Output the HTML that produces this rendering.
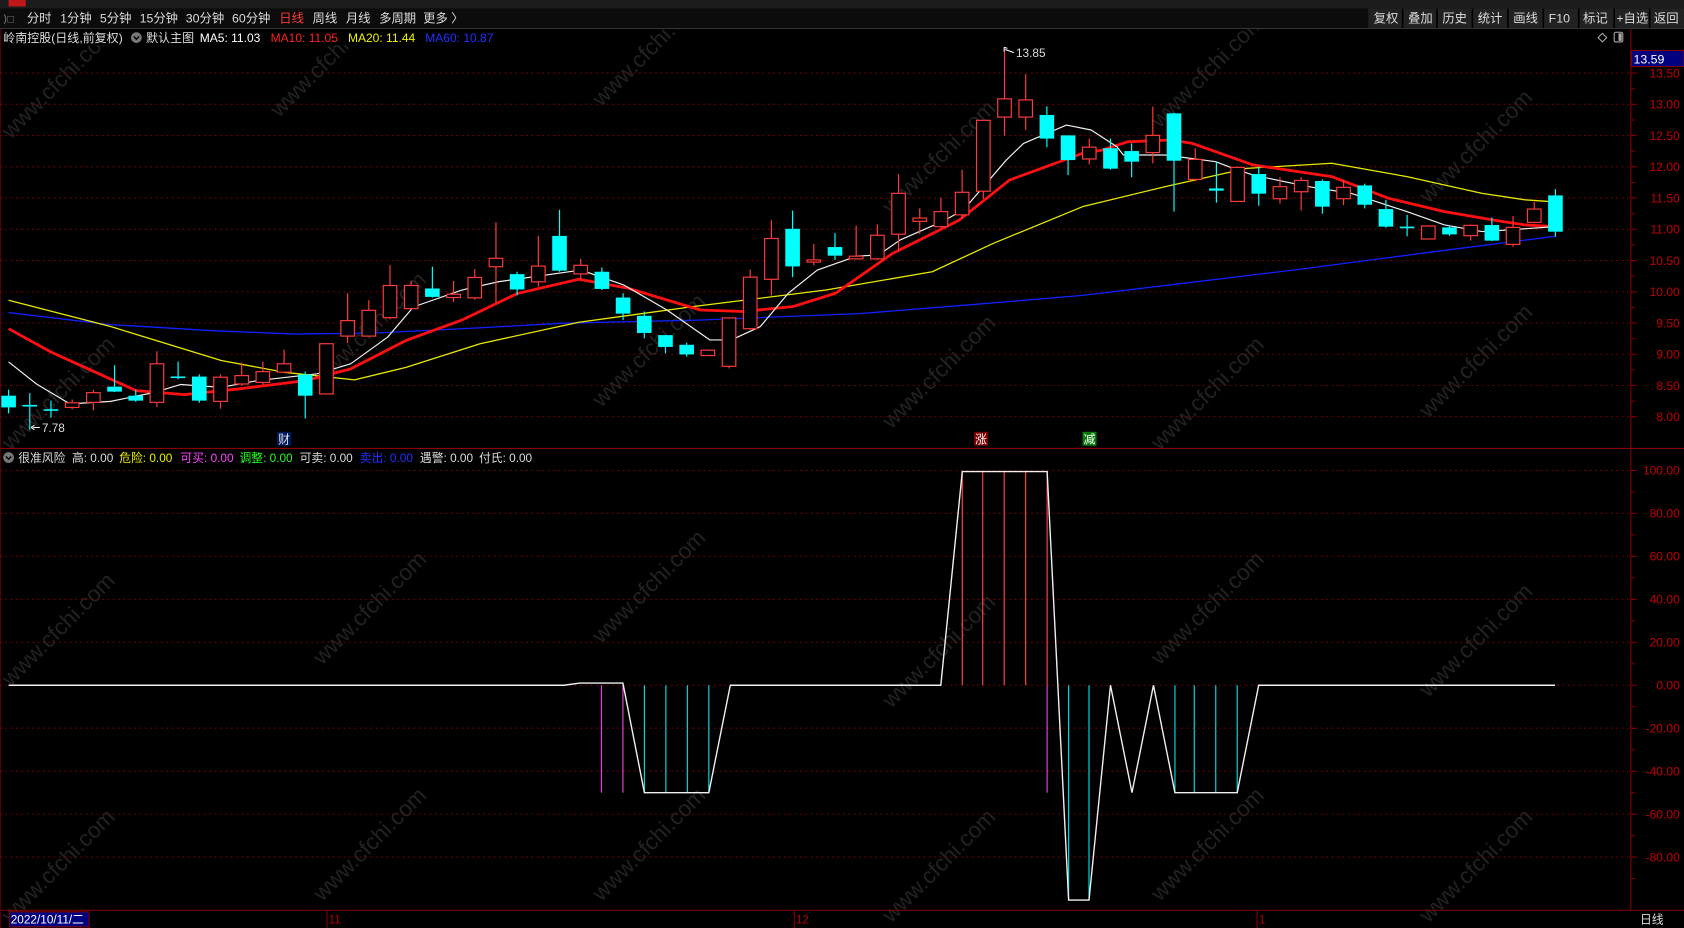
<!DOCTYPE html>
<html><head><meta charset="utf-8"><style>
html,body{margin:0;padding:0;background:#000;overflow:hidden}
svg{display:block}
text{font-family:"Liberation Sans","Noto Sans CJK SC",sans-serif}
</style></head><body>
<svg id="s" width="1684" height="928" viewBox="0 0 1568 864" xmlns="http://www.w3.org/2000/svg">
<rect width="1568" height="864" fill="#000"/>
<g id="wm" fill="#222" font-size="21"></g>
<rect x="0" y="0" width="1568" height="8" fill="#1c1c1c"/>
<rect x="8" y="0" width="16" height="6" fill="#c01818"/>
<rect x="0" y="8" width="1568" height="19" fill="#0c0c0c"/>
<line x1="0" y1="26.5" x2="1568" y2="26.5" stroke="#333"/>
<g font-size="11.5" fill="#ddd">
<text x="3" y="21" fill="#888" font-size="10">⟩□</text>
<text x="25" y="21">分时</text><text x="56" y="21">1分钟</text><text x="93" y="21">5分钟</text>
<text x="130" y="21">15分钟</text><text x="173" y="21">30分钟</text><text x="216" y="21">60分钟</text>
<text x="260" y="21" fill="#ff3b3b">日线</text><text x="291" y="21">周线</text><text x="322" y="21">月线</text>
<text x="353" y="21">多周期</text><text x="394" y="21">更多 〉</text>
</g>
<g font-size="11.5" fill="#ddd">
<rect x="1274" y="8" width="294" height="18" fill="#222"/>
<g stroke="#000" stroke-width="1.5"><line x1="1306" y1="8" x2="1306" y2="26"/><line x1="1338" y1="8" x2="1338" y2="26"/><line x1="1371" y1="8" x2="1371" y2="26"/><line x1="1404" y1="8" x2="1404" y2="26"/><line x1="1437" y1="8" x2="1437" y2="26"/><line x1="1470" y1="8" x2="1470" y2="26"/><line x1="1503" y1="8" x2="1503" y2="26"/><line x1="1536" y1="8" x2="1536" y2="26"/></g>
<text x="1279" y="21">复权</text><text x="1311" y="21">叠加</text><text x="1343" y="21">历史</text><text x="1376" y="21">统计</text><text x="1409" y="21">画线</text><text x="1442" y="21">F10</text><text x="1474" y="21">标记</text><text x="1505" y="21">+自选</text><text x="1540" y="21">返回</text>
</g>
<rect x="0" y="27" width="470" height="15" fill="#000"/>
<g font-size="11.2">
<text x="3" y="39" fill="#ddd">岭南控股(日线,前复权)</text>
<circle cx="127" cy="35" r="5" fill="#777"/><path d="M124.5 33.8 L127 36.5 L129.5 33.8" stroke="#000" fill="none" stroke-width="1.3"/>
<text x="136" y="39" fill="#ddd">默认主图</text>
<text x="186" y="39" fill="#fff">MA5: 11.03</text>
<text x="252" y="39" fill="#ff2020">MA10: 11.05</text>
<text x="324" y="39" fill="#f0f000">MA20: 11.44</text>
<text x="396" y="39" fill="#2030ff">MA60: 10.87</text>
</g>
<path d="M1488 35 l4 -4 l4 4 l-4 4z" fill="none" stroke="#aaa"/>
<rect x="1503" y="30" width="8" height="9" rx="1.5" fill="none" stroke="#aaa"/><rect x="1507" y="31" width="3" height="7" fill="#aaa"/>
<line x1="1518.5" y1="27" x2="1518.5" y2="847" stroke="#8a0000"/>
<line x1="0" y1="417.5" x2="1568" y2="417.5" stroke="#8a0000"/>
<line x1="0" y1="847.5" x2="1568" y2="847.5" stroke="#8a0000"/>
<line x1="0.5" y1="27" x2="0.5" y2="864" stroke="#500"/>
<g id="grid"></g>
<rect x="1519" y="47" width="49" height="15" fill="#000080" stroke="#8a0000"/>
<text x="1521" y="59" fill="#fff" font-size="11.5">13.59</text>
<g id="ma"></g>
<g id="cd"></g>
<path d="M31 398 L37 398" stroke="#fff"/><path d="M29 398 l3 -2 M29 398 l3 2" stroke="#fff"/>
<text x="39" y="402" fill="#ddd" font-size="11">7.78</text>
<path d="M936 46 L944 49" stroke="#fff"/><path d="M935 44 l0 4 M935 44 l3 1" stroke="#fff"/>
<text x="946" y="53" fill="#ddd" font-size="11">13.85</text>
<rect x="258" y="402" width="13" height="13" fill="#001a60"/><text x="259" y="413" fill="#ddd" font-size="11">财</text>
<rect x="907" y="402" width="13" height="13" fill="#7a0000"/><text x="908" y="413" fill="#fff" font-size="11">涨</text>
<rect x="1008" y="402" width="13" height="13" fill="#0a7a0a"/><text x="1009" y="413" fill="#fff" font-size="11">减</text>
<g font-size="11">
<circle cx="8" cy="426" r="5" fill="#777"/><path d="M5.5 425 L8 427.5 L10.5 425" stroke="#000" fill="none" stroke-width="1.3"/>
<text x="17" y="430" fill="#ddd">很准风险</text>
<text x="67" y="430" fill="#ddd">高: 0.00</text>
<text x="111" y="430" fill="#f0f000">危险: 0.00</text>
<text x="168" y="430" fill="#ff40ff">可买: 0.00</text>
<text x="223" y="430" fill="#20ff20">调整: 0.00</text>
<text x="279" y="430" fill="#ddd">可卖: 0.00</text>
<text x="335" y="430" fill="#2030ff">卖出: 0.00</text>
<text x="391" y="430" fill="#ddd">遇警: 0.00</text>
<text x="446" y="430" fill="#ddd">付氏: 0.00</text>
</g>
<g id="ind"></g>
<rect x="9" y="849" width="74" height="14" fill="#000080" stroke="#8a0000"/>
<text x="10" y="860" fill="#fff" font-size="11">2022/10/11/二</text>
<g stroke="#8a0000"><line x1="304.5" y1="848" x2="304.5" y2="864"/><line x1="739.5" y1="848" x2="739.5" y2="864"/><line x1="1170.5" y1="848" x2="1170.5" y2="864"/></g>
<g fill="#b00000" font-size="11"><text x="306" y="860">11</text><text x="741" y="860">12</text><text x="1172" y="860">1</text></g>
<text x="1527" y="860" fill="#ddd" font-size="11">日线</text>
</svg>
<script>
var NS="http://www.w3.org/2000/svg";
function el(p,t,a,txt){var e=document.createElementNS(NS,t);for(var k in a)e.setAttribute(k,a[k]);if(txt)e.textContent=txt;document.getElementById(p).appendChild(e);return e;}
for(var i=0;i<=11;i++){var p=13.5-i*0.5,y=68+i*29.09;
 el("grid","line",{x1:0,y1:y,x2:1518,y2:y,stroke:"#800000","stroke-dasharray":"1.5 3.5"});
 el("grid","line",{x1:1519,y1:y,x2:1524,y2:y,stroke:"#8a0000"});
 el("grid","line",{x1:1519,y1:y-14.5,x2:1522,y2:y-14.5,stroke:"#8a0000"});
 el("grid","text",{x:1564,y:y+4,fill:"#c00000","font-size":"11.2","text-anchor":"end"},p.toFixed(2));}
for(var v=100;v>=-80;v-=20){var y=638-2*v;
 el("grid","line",{x1:0,y1:y,x2:1518,y2:y,stroke:"#800000","stroke-dasharray":"1.5 3.5"});
 el("grid","line",{x1:1519,y1:y,x2:1524,y2:y,stroke:"#8a0000"});
 el("grid","line",{x1:1519,y1:y+20,x2:1522,y2:y+20,stroke:"#8a0000"});
 el("grid","text",{x:1564,y:y+4,fill:"#c00000","font-size":"11.2","text-anchor":"end"},v.toFixed(2));}
[[10,130],[260,110],[560,100],[830,200],[1080,120],[1330,190],[10,420],[300,360],[560,380],[830,400],[1080,420],[1330,390],[10,640],[300,620],[560,600],[830,660],[1080,620],[1330,650],[10,860],[300,840],[560,840],[830,860],[1080,840],[1330,860]].forEach(function(q){
 el("wm","text",{x:q[0],y:q[1],transform:"rotate(-45 "+q[0]+" "+q[1]+")"},"www.cfchi.com");});
function pl(pts,c,w){el("ma","polyline",{points:pts.map(function(a){return a.join(",")}).join(" "),fill:"none",stroke:c,"stroke-width":w,"stroke-linejoin":"round"});}
pl([[8,291],[100,302],[200,308],[275,311],[350,310],[450,305],[521,301],[650,298],[800,292],[900,284],[1008,275],[1100,264],[1208,251],[1330,235],[1448,220]],"#1020ff",1.2);
pl([[8,279.5],[103,304],[206,335.6],[264,346.5],[330,353.7],[378,342],[447,320],[539,300],[645,285.5],[769,270],[868,253],[925,226.5],[1008,192.4],[1085,173.7],[1161,156.7],[1240,152],[1310,164.4],[1380,180],[1420,186],[1448,188]],"#e8e800",1.2);
pl([[8,306],[47.6,327.8],[85.5,345],[126.8,363.7],[171.6,367.4],[223,362],[285,354.3],[326.5,343.4],[378,317],[430,298],[481.5,273.3],[539,260],[585,268.4],[652,288.6],[692,290],[738,285.5],[778,273],[831,236],[893,205],[940,167.6],[1008,142.7],[1025,140],[1050,132],[1090,130.3],[1110,133.4],[1167,153.6],[1240,164.4],[1293,184.6],[1345,197],[1396,205.7],[1420,209.4],[1448,211]],"#ff1010",2.6);
pl([[8,337],[34,357.5],[65,376],[103,373.7],[144,365.3],[168,358],[206,360.6],[240,354.3],[295.5,348],[326.5,338.7],[361,313.8],[385,285.7],[430,270],[464,262.3],[541,251.4],[581,265.4],[621,288.6],[661,316.5],[681,316.5],[708,304],[734,273],[761,251.4],[798,238.4],[818,237.4],[838,223.5],[877,206.4],[897,195.5],[937,149],[953,133.5],[993,116.4],[1016,121],[1040,136.6],[1046,144.3],[1085,144.3],[1132,150.5],[1152,158.2],[1167,163],[1218,173.7],[1258,180],[1310,197],[1345,209.4],[1380,215.6],[1405,214],[1448,211]],"#f0f0f0",1.1);
var C=[
["c",368.4,379.3,362.8,384.9],["c",377,378.5,366,400],["c",381,382.5,373,389],["r",375,379.3,372,381],["r",365.6,374.6,363,382],
["c",360,364.6,340,365],["c",368.4,373,363,374],["r",338.7,374.6,327,379],["c",350.5,352,336.6,353],["c",350.6,373,348.5,375],
["r",351.2,373.7,348.5,380.5],["r",349.7,357.5,337.5,359],["r",346,356,336.6,358],["r",338.7,346.5,325.5,347.5],["c",348.7,368.4,346,389.6],
["r",320,366.8,320,367],["r",298.5,312.9,273,319.4],["r",288.9,312.9,279.5,313],["r",265.8,295.7,246.8,297.3],["r",265.8,287.3,261.5,288],
["c",268.6,276.4,248.3,277],["r",273.9,277,261.5,281],["r",258.3,277.3,250.5,279],["r",240.5,248.3,207,282],["c",255.2,269.5,253,275],
["r",247.7,262.4,219.6,267],["c",219.6,252,195.3,253],["r",247,255,241,261],["c",253,269,249,270],["c",277,292,273,298],
["c",294,310,290,315],["c",312,323,312,329],["c",321,330,319,332],["r",326,331,326,331],["r",296,341,296,343],
["r",258,306,251,307],["r",222,260,205,275],["c",213,248,196,258],["r",242,244,227,247],["c",230,238,217,242],
["r",238.5,241,210,241],["r",219,241,209,242],["r",180,218,162,234],["r",203,206,194,218],["r",197,211,184,212],
["r",179,200,158,203],["r",112,178,112,185],["r",92,109,47,126],["r",93,109,69,121],["c",107,129,99,137],
["c",126,149,126,163],["r",137,148,129,153],["c",138,157,129,158],["c",140.6,150.5,133.5,165],["r",126,142,99.3,152],
["c",105.5,149.6,105,197],["r",148.4,167,138,169],["c",175.4,177.5,150.5,188.7],["r",155.8,187.5,155,188],["c",162,180.3,155,191.5],
["r",173.8,185,165,189.5],["r",168,178.5,165,196],["c",168.5,192.4,167,199],["r",174.4,185,167.5,191],["c",172.6,190.6,171,194],
["c",194.6,211,186,212],["c",211,212.5,200,220],["r",210.4,222.5,209.5,223],["c",211.7,218.2,210,219.5],["r",209.8,219.4,209,224],
["c",209.5,224,202.5,224.5],["r",211.7,227.5,201,229.7],["r",194.6,207,188,208],["c",181.9,215.7,176,220.4]];
C.forEach(function(c,i){var x=8+i*19.73,col=c[0]=="r"?"#ff3a3a":"#00ffff";
 el("cd","line",{x1:x,y1:c[3],x2:x,y2:c[4],stroke:col,"stroke-width":1.1});
 var h=Math.max(c[2]-c[1],1.2);
 if(c[0]=="r")el("cd","rect",{x:x-6.3,y:c[1],width:12.6,height:h,fill:"#000",stroke:col,"stroke-width":1.1});
 else el("cd","rect",{x:x-6.8,y:c[1],width:13.6,height:h,fill:col});});
function vl(x,y1,y2,c){el("ind","line",{x1:x,y1:y1,x2:x,y2:y2,stroke:c,"stroke-width":1.1});}
[560,580].forEach(function(x){vl(x,638,738,"#e040e0")});
[600,620,640,660].forEach(function(x){vl(x,638,738,"#00d8e0")});
[896,915,935,955].forEach(function(x){vl(x,439,638,"#ff4040")});
vl(975,439,638,"#ff4040");vl(975,638,738,"#e040e0");
[995,1014].forEach(function(x){vl(x,638,838,"#00d8e0")});
[1094,1112,1132,1152].forEach(function(x){vl(x,638,738,"#00d8e0")});
el("ind","polyline",{points:"8,638 525,638 540,636 580,636 600,738 660,738 680,638 876,638 896,439 975,439 995,838 1014,838 1034,638 1054,738 1074,638 1094,738 1152,738 1172,638 1448,638",fill:"none",stroke:"#f0f0f0","stroke-width":1.3});
</script>
</body></html>
